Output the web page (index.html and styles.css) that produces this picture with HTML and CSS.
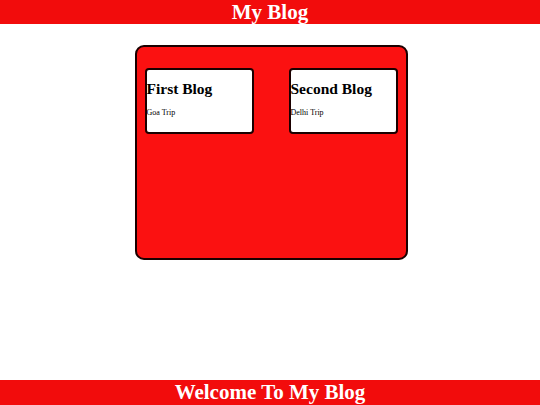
FILE: index.html
```html
<!DOCTYPE html>
<html>
<head>
<meta charset="utf-8">
<title>My Blog</title>
<link rel="stylesheet" href="styles.css">
</head>
<body>
<div class="page">
  <header class="top-bar">My Blog</header>
  <main class="main">
    <section class="board">
      <article class="card">
        <h2 class="card-title">First Blog</h2>
        <p class="card-text">Goa Trip</p>
      </article>
      <article class="card">
        <h2 class="card-title">Second Blog</h2>
        <p class="card-text">Delhi Trip</p>
      </article>
    </section>
  </main>
  <footer class="bottom-bar">Welcome To My Blog</footer>
</div>
</body>
</html>
```

FILE: styles.css
```css
html, body {
  margin: 0;
  padding: 0;
  background: #ffffff;
  font-family: "Liberation Serif", "Times New Roman", serif;
}
.page {
  height: 100vh;
  display: flex;
  flex-direction: column;
  overflow: hidden;
}
.top-bar, .bottom-bar {
  background: #f20c0c;
  color: #ffffff;
  font-weight: bold;
  font-size: 21px;
  line-height: 24px;
  text-align: center;
  height: 24px;
  flex: none;
}
.bottom-bar {
  height: 25px;
}
.main {
  flex: 1;
  display: flex;
  justify-content: center;
  align-items: flex-start;
}
.board {
  box-sizing: border-box;
  width: 273px;
  height: 215px;
  margin-top: 21px;
  margin-left: 2px;
  background: #fb1111;
  border: 2px solid #1a0000;
  border-radius: 9px;
  padding: 21px 8px 0;
  display: flex;
  justify-content: space-between;
  align-items: flex-start;
}
.card {
  box-sizing: border-box;
  width: 109px;
  height: 66px;
  background: #ffffff;
  border: 2px solid #1a0000;
  border-radius: 4px;
}
.card-title {
  margin: 10px 0 0;
  font-size: 15.5px;
  line-height: 18px;
  font-weight: bold;
  color: #000000;
}
.card-text {
  margin: 10px 0 0;
  font-size: 8px;
  line-height: 9px;
  color: #000000;
}
```
